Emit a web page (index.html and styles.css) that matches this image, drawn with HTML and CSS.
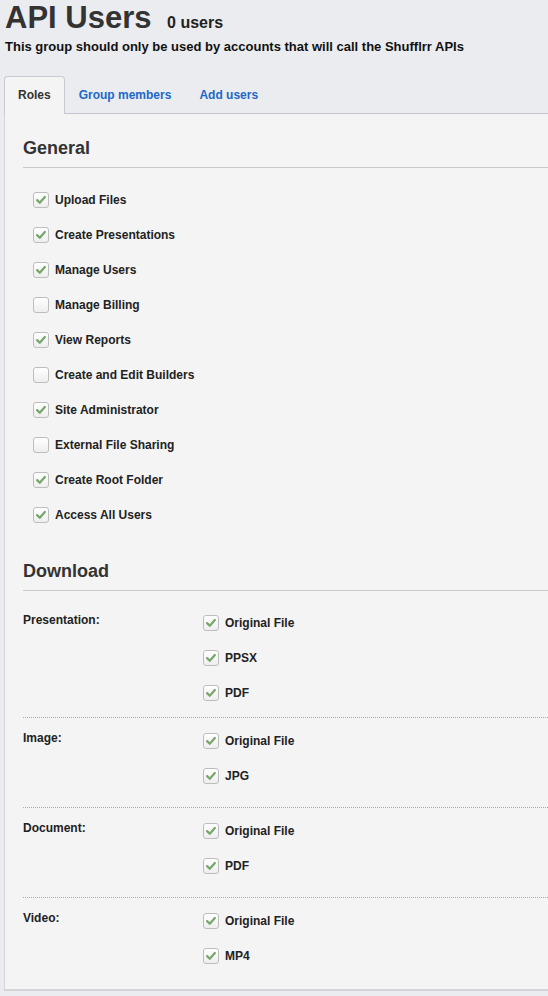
FILE: index.html
```html
<!DOCTYPE html>
<html lang="en">
<head>
<meta charset="utf-8">
<title>API Users</title>
<link rel="stylesheet" href="styles.css">
</head>
<body>
<header class="head">
  <h1 class="title">API Users <span class="count">0 users</span></h1>
  <p class="subtitle">This group should only be used by accounts that will call the Shufflrr APIs</p>
</header>

<nav class="tabs">
  <a class="tab active">Roles</a>
  <a class="tab">Group members</a>
  <a class="tab">Add users</a>
</nav>

<section class="panel">
  <h2 class="section-title general-title">General</h2>
  <ul class="checks general">
    <li class="check on"><span class="box"><svg viewBox="0 0 16 16"><path d="M3.6 8.2 L6.6 11.2 L12.4 4.6"/></svg></span>Upload Files</li>
    <li class="check on"><span class="box"><svg viewBox="0 0 16 16"><path d="M3.6 8.2 L6.6 11.2 L12.4 4.6"/></svg></span>Create Presentations</li>
    <li class="check on"><span class="box"><svg viewBox="0 0 16 16"><path d="M3.6 8.2 L6.6 11.2 L12.4 4.6"/></svg></span>Manage Users</li>
    <li class="check"><span class="box"></span>Manage Billing</li>
    <li class="check on"><span class="box"><svg viewBox="0 0 16 16"><path d="M3.6 8.2 L6.6 11.2 L12.4 4.6"/></svg></span>View Reports</li>
    <li class="check"><span class="box"></span>Create and Edit Builders</li>
    <li class="check on"><span class="box"><svg viewBox="0 0 16 16"><path d="M3.6 8.2 L6.6 11.2 L12.4 4.6"/></svg></span>Site Administrator</li>
    <li class="check"><span class="box"></span>External File Sharing</li>
    <li class="check on"><span class="box"><svg viewBox="0 0 16 16"><path d="M3.6 8.2 L6.6 11.2 L12.4 4.6"/></svg></span>Create Root Folder</li>
    <li class="check on"><span class="box"><svg viewBox="0 0 16 16"><path d="M3.6 8.2 L6.6 11.2 L12.4 4.6"/></svg></span>Access All Users</li>
  </ul>

  <h2 class="section-title download">Download</h2>

  <div class="dl-group first">
    <div class="dl-label">Presentation:</div>
    <ul class="checks">
      <li class="check on"><span class="box"><svg viewBox="0 0 16 16"><path d="M3.6 8.2 L6.6 11.2 L12.4 4.6"/></svg></span>Original File</li>
      <li class="check on"><span class="box"><svg viewBox="0 0 16 16"><path d="M3.6 8.2 L6.6 11.2 L12.4 4.6"/></svg></span>PPSX</li>
      <li class="check on"><span class="box"><svg viewBox="0 0 16 16"><path d="M3.6 8.2 L6.6 11.2 L12.4 4.6"/></svg></span>PDF</li>
    </ul>
  </div>
  <div class="dl-group">
    <div class="dl-label">Image:</div>
    <ul class="checks">
      <li class="check on"><span class="box"><svg viewBox="0 0 16 16"><path d="M3.6 8.2 L6.6 11.2 L12.4 4.6"/></svg></span>Original File</li>
      <li class="check on"><span class="box"><svg viewBox="0 0 16 16"><path d="M3.6 8.2 L6.6 11.2 L12.4 4.6"/></svg></span>JPG</li>
    </ul>
  </div>
  <div class="dl-group">
    <div class="dl-label">Document:</div>
    <ul class="checks">
      <li class="check on"><span class="box"><svg viewBox="0 0 16 16"><path d="M3.6 8.2 L6.6 11.2 L12.4 4.6"/></svg></span>Original File</li>
      <li class="check on"><span class="box"><svg viewBox="0 0 16 16"><path d="M3.6 8.2 L6.6 11.2 L12.4 4.6"/></svg></span>PDF</li>
    </ul>
  </div>
  <div class="dl-group last">
    <div class="dl-label">Video:</div>
    <ul class="checks">
      <li class="check on"><span class="box"><svg viewBox="0 0 16 16"><path d="M3.6 8.2 L6.6 11.2 L12.4 4.6"/></svg></span>Original File</li>
      <li class="check on"><span class="box"><svg viewBox="0 0 16 16"><path d="M3.6 8.2 L6.6 11.2 L12.4 4.6"/></svg></span>MP4</li>
    </ul>
  </div>
</section>
</body>
</html>
```

FILE: styles.css
```css
html, body {
  margin: 0;
  padding: 0;
}

body {
  background: #ebecf0;
  font-family: "Liberation Sans", Arial, sans-serif;
  color: #222;
  overflow-x: hidden;
}

.head {
  padding-left: 5px;
}

.title {
  margin: 0;
  font-size: 31px;
  line-height: 35px;
  font-weight: bold;
  color: #333;
}

.count {
  margin-left: 7px;
  font-size: 16px;
  line-height: 16px;
  color: #222;
}

.subtitle {
  margin: 4px 0 0;
  font-size: 13px;
  line-height: 16px;
  font-weight: bold;
  color: #111;
}

.tabs {
  display: flex;
  margin-top: 21px;
  padding-left: 4px;
  position: relative;
  z-index: 1;
}

.tab {
  display: block;
  padding: 0 13px;
  height: 36px;
  line-height: 36px;
  border: 1px solid transparent;
  border-bottom: none;
  font-size: 12px;
  font-weight: bold;
  color: #2068c8;
  text-decoration: none;
}

.tab.active {
  background: #f4f4f4;
  color: #333;
  border-color: #c8c9d2;
  border-radius: 4px 4px 0 0;
  height: 37px;
  margin-bottom: -1px;
}

.panel {
  margin-left: 4px;
  background: #f4f4f4;
  border-top: 1px solid #c4c5d0;
  border-left: 1px solid #d6d6da;
  border-bottom: 2px solid #d4d4d7;
  padding: 0 0 25px 18px;
}

.section-title {
  margin: 0;
  padding: 22px 0 8px;
  font-size: 18px;
  line-height: 22px;
  font-weight: bold;
  color: #333;
  border-bottom: 1px solid #c9c9c9;
}

.section-title.general-title {
  padding-top: 23px;
}

.section-title.download {
  padding-top: 37px;
}

.checks {
  list-style: none;
  margin: 0;
  padding: 0;
  display: flex;
  flex-direction: column;
  gap: 19px;
}

.checks.general {
  padding: 24px 0 0 10px;
}

.check {
  display: flex;
  align-items: center;
  height: 16px;
  gap: 6px;
  font-size: 12px;
  font-weight: bold;
  color: #222;
}

.box {
  box-sizing: border-box;
  width: 16px;
  height: 16px;
  flex: none;
  border: 1px solid #bdbdbd;
  border-radius: 3px;
  background: linear-gradient(#ffffff, #eeeeee);
  display: flex;
}

.box svg {
  width: 14px;
  height: 14px;
  fill: none;
  stroke: #78a66c;
  stroke-width: 2.6;
  stroke-linecap: round;
  stroke-linejoin: round;
}

.dl-group {
  display: flex;
  padding: 15px 0 23px;
  border-bottom: 1px dotted #aaaaaa;
}

.dl-group.first {
  padding: 24px 0 16px;
}

.dl-group.last {
  border-bottom: none;
  padding-bottom: 0;
}

.dl-label {
  width: 180px;
  flex: none;
  margin-top: -3px;
  font-size: 12px;
  line-height: 16px;
  font-weight: bold;
  color: #222;
}
```
